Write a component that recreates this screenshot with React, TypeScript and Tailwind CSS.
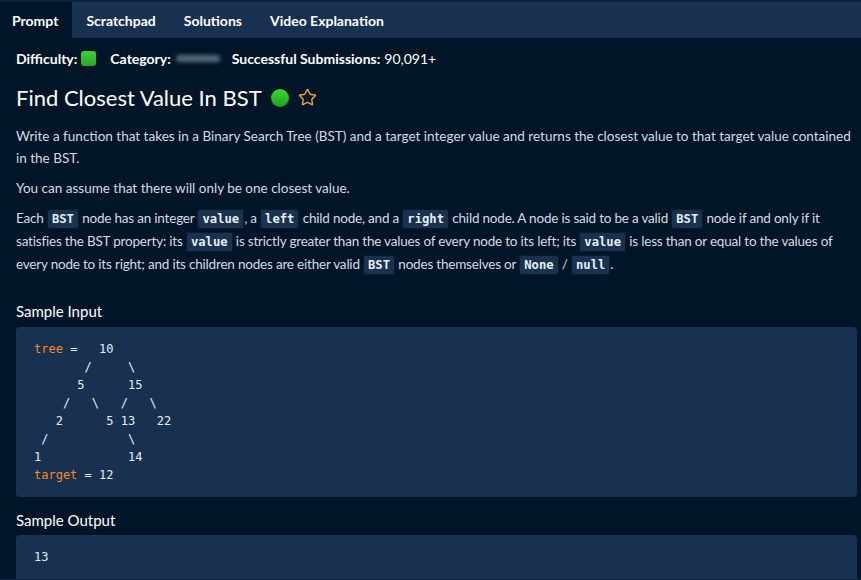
import { Star } from 'lucide-react';

const Code = ({ children }: { children: string }) => (
  <code className="rounded-[3px] border border-[#0a1a2c] bg-[#1a3150] px-[4px] py-[2px] font-['DejaVu_Sans_Mono',monospace] text-[12.2px] font-semibold tracking-normal text-[#e8eef5]">
    {children}
  </code>
);

const tabs = ['Prompt', 'Scratchpad', 'Solutions', 'Video Explanation'];

const treeLines = [
  '       /     \\',
  '      5      15',
  '    /   \\   /   \\',
  '   2      5 13   22',
  ' /           \\',
  '1            14',
];

const App = () => {
  return (
    <div className="h-[580px] w-[861px] overflow-hidden bg-[#011528] font-['Lato',sans-serif] text-[#d3dbe4]">
      {/* Tabs */}
      <div className="border-t-2 border-[#0b2341] bg-[#183150]">
        <div className="flex h-[36px] items-stretch text-[14px] font-bold text-white">
          {tabs.map((t, i) => (
            <div
              key={t}
              className={`flex items-center ${i === 0 ? 'bg-[#011528] pl-[12px] pr-[14px]' : 'px-[14px]'}`}
            >
              {t}
            </div>
          ))}
        </div>
      </div>

      <div className="pl-[16px] pr-[4px]">
        {/* Meta row */}
        <div className="mt-[10px] flex items-center text-[14px] text-white">
          <span className="font-bold">Difficulty:</span>
          <span className="ml-[4px] h-[15px] w-[15px] rounded-[3px] bg-gradient-to-b from-[#3ed13a] to-[#24a928]" />
          <span className="ml-[14px] font-bold">Category:</span>
          <span className="ml-[5px] h-[7px] w-[44px] rounded-full bg-[#5b6b7d] blur-[2px]" />
          <span className="ml-[12px] font-bold">Successful Submissions:</span>
          <span className="ml-[4px]">90,091+</span>
        </div>

        {/* Title */}
        <div className="mt-[12px] flex items-center">
          <h1 className="text-[22px] font-normal text-white">Find Closest Value In BST</h1>
          <span className="ml-[9px] h-[18px] w-[18px] rounded-full bg-gradient-to-b from-[#36dd2e] to-[#1c9e22]" />
          <Star className="ml-[9px] h-[19px] w-[19px] text-[#e1a72f]" strokeWidth={1.8} />
        </div>

        <div className="mt-[11px] text-[13.5px] leading-[22px]">
          <p>
            Write a function that takes in a Binary Search Tree (BST) and a target integer value and returns the
            closest value to that target value contained in the BST.
          </p>
          <p className="mt-[8px]">You can assume that there will only be one closest value.</p>
          <p className="mt-[8px] tracking-[-0.2px]">
            Each <Code>BST</Code> node has an integer <Code>value</Code>, a <Code>left</Code> child node, and a{' '}
            <Code>right</Code> child node. A node is said to be a valid <Code>BST</Code> node if and only if it
            satisfies the BST property: its <Code>value</Code> is strictly greater than the values of every node to
            its left; its <Code>value</Code> is less than or equal to the values of every node to its right; and its
            children nodes are either valid <Code>BST</Code> nodes themselves or <Code>None</Code> /{' '}
            <Code>null</Code>.
          </p>
        </div>

        {/* Sample input */}
        <h2 className="mt-[24px] text-[15px] text-white">Sample Input</h2>
        <div className="mt-[4px] rounded-[4px] bg-[#183150] px-[18px] py-[13px]">
          <pre className="font-['DejaVu_Sans_Mono',monospace] text-[12px] leading-[18px] text-[#e6edf5]">
            <span className="text-[#f08c26]">tree</span>
            {' =   10\n'}
            {treeLines.join('\n')}
            {'\n'}
            <span className="text-[#f08c26]">target</span>
            {' = 12'}
          </pre>
        </div>

        {/* Sample output */}
        <h2 className="mt-[12px] text-[15px] text-white">Sample Output</h2>
        <div className="mt-[4px] h-[44px] rounded-t-[4px] bg-[#183150] px-[18px] pt-[13px]">
          <pre className="font-['DejaVu_Sans_Mono',monospace] text-[12px] leading-[18px] text-[#e6edf5]">13</pre>
        </div>
      </div>
      <div className="h-[6px] bg-[#0b2341]" />
    </div>
  );
};

export default App;
